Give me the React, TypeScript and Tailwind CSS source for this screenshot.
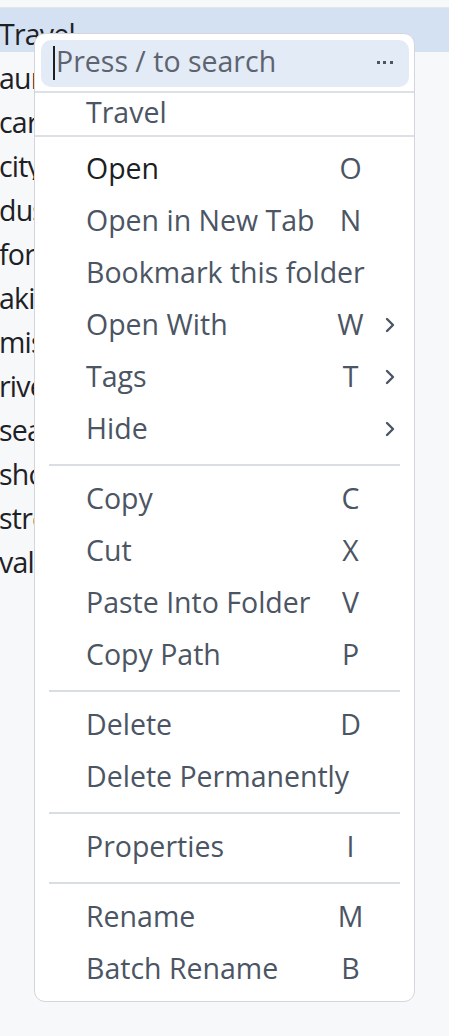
import React from "react";

const rows = [
  "Travel",
  "aurora",
  "cars",
  "city",
  "dusk",
  "forest",
  "akita",
  "misc",
  "river",
  "seaside",
  "shore",
  "street",
  "valley",
];

type Item = { label: string; key?: string; sub?: boolean; strong?: boolean };

const groups: Item[][] = [
  [
    { label: "Open", key: "O", strong: true },
    { label: "Open in New Tab", key: "N" },
    { label: "Bookmark this folder" },
    { label: "Open With", key: "W", sub: true },
    { label: "Tags", key: "T", sub: true },
    { label: "Hide", sub: true },
  ],
  [
    { label: "Copy", key: "C" },
    { label: "Cut", key: "X" },
    { label: "Paste Into Folder", key: "V" },
    { label: "Copy Path", key: "P" },
  ],
  [
    { label: "Delete", key: "D" },
    { label: "Delete Permanently" },
  ],
  [{ label: "Properties", key: "I" }],
  [
    { label: "Rename", key: "M" },
    { label: "Batch Rename", key: "B" },
  ],
];

function Chevron() {
  return (
    <svg width="12" height="18" viewBox="0 0 12 18" fill="none">
      <polyline
        points="3,3 9,9 3,15"
        stroke="#4b5563"
        strokeWidth="2.4"
        strokeLinecap="round"
        strokeLinejoin="round"
      />
    </svg>
  );
}

function MenuItem({ item }: { item: Item }) {
  return (
    <div className="flex h-[52px] items-center pb-[2px]">
      <div
        className={
          "flex-1 pl-[51px] whitespace-nowrap " +
          (item.strong ? "text-[#1b1f24]" : "text-[#4b5563]")
        }
      >
        {item.label}
      </div>
      <div className="w-[30px] text-center text-[#4b5563] whitespace-nowrap">{item.key ?? ""}</div>
      <div className="flex w-[48.5px] items-center justify-center pt-[1px]">
        {item.sub ? <Chevron /> : null}
      </div>
    </div>
  );
}

export default function App() {
  return (
    <div className="relative h-[1036px] w-[449px] overflow-hidden bg-[#f7f8fa] font-['Open_Sans',sans-serif] text-[28.5px] leading-none">
      <div className="h-[8px] border-b border-[#e3e6ea] bg-[#f7f8fa]" />
      <div className="flex flex-col">
        {rows.map((r, i) => (
          <div
            key={r}
            className={
              "flex h-[44px] items-center whitespace-nowrap text-[#1d2126] " +
              (i === 0 ? "bg-[#d3e1f2]" : "")
            }
          >
            <div
              className={
                "-ml-[1px] pt-[8px] tracking-[-0.8px] " +
                (i === 0 ? "" : "w-[35px] overflow-hidden")
              }
            >
              {r}
            </div>
          </div>
        ))}
      </div>

      <div className="absolute left-[34px] top-[33px] w-[381px] rounded-[11px] border-[1.5px] border-[#d3d7dd] bg-white pb-[5px]">
        <div className="px-[5.5px] pt-[5.5px] pb-[4px]">
          <div className="flex h-[47px] items-center rounded-[10px] bg-[#e3ebf7] pl-[12px] pr-[16px]">
            <div className="h-[34px] w-[2.5px] shrink-0 bg-[#1b1f24]" />
            <div className="flex-1 pb-[4px] pl-[1px] text-[#5d6470]">Press / to search</div>
            <div className="flex gap-[3.5px] pb-[2px]">
              <div className="h-[3px] w-[3px] bg-[#4b5563]" />
              <div className="h-[3px] w-[3px] bg-[#4b5563]" />
              <div className="h-[3px] w-[3px] bg-[#4b5563]" />
            </div>
          </div>
        </div>
        <div className="h-[2px] bg-[#dde1e6]" />
        <div className="flex h-[42px] items-center pb-[3px] pl-[51px] text-[#4b5563]">Travel</div>
        <div className="h-[2px] bg-[#dde1e6]" />
        <div className="pt-[7px]">
          {groups.map((g, gi) => (
            <div key={gi}>
              {gi > 0 ? <div className="mx-[14px] my-[8px] h-[2px] bg-[#dadee3]" /> : null}
              {g.map((it) => (
                <MenuItem key={it.label} item={it} />
              ))}
            </div>
          ))}
        </div>
      </div>
    </div>
  );
}
